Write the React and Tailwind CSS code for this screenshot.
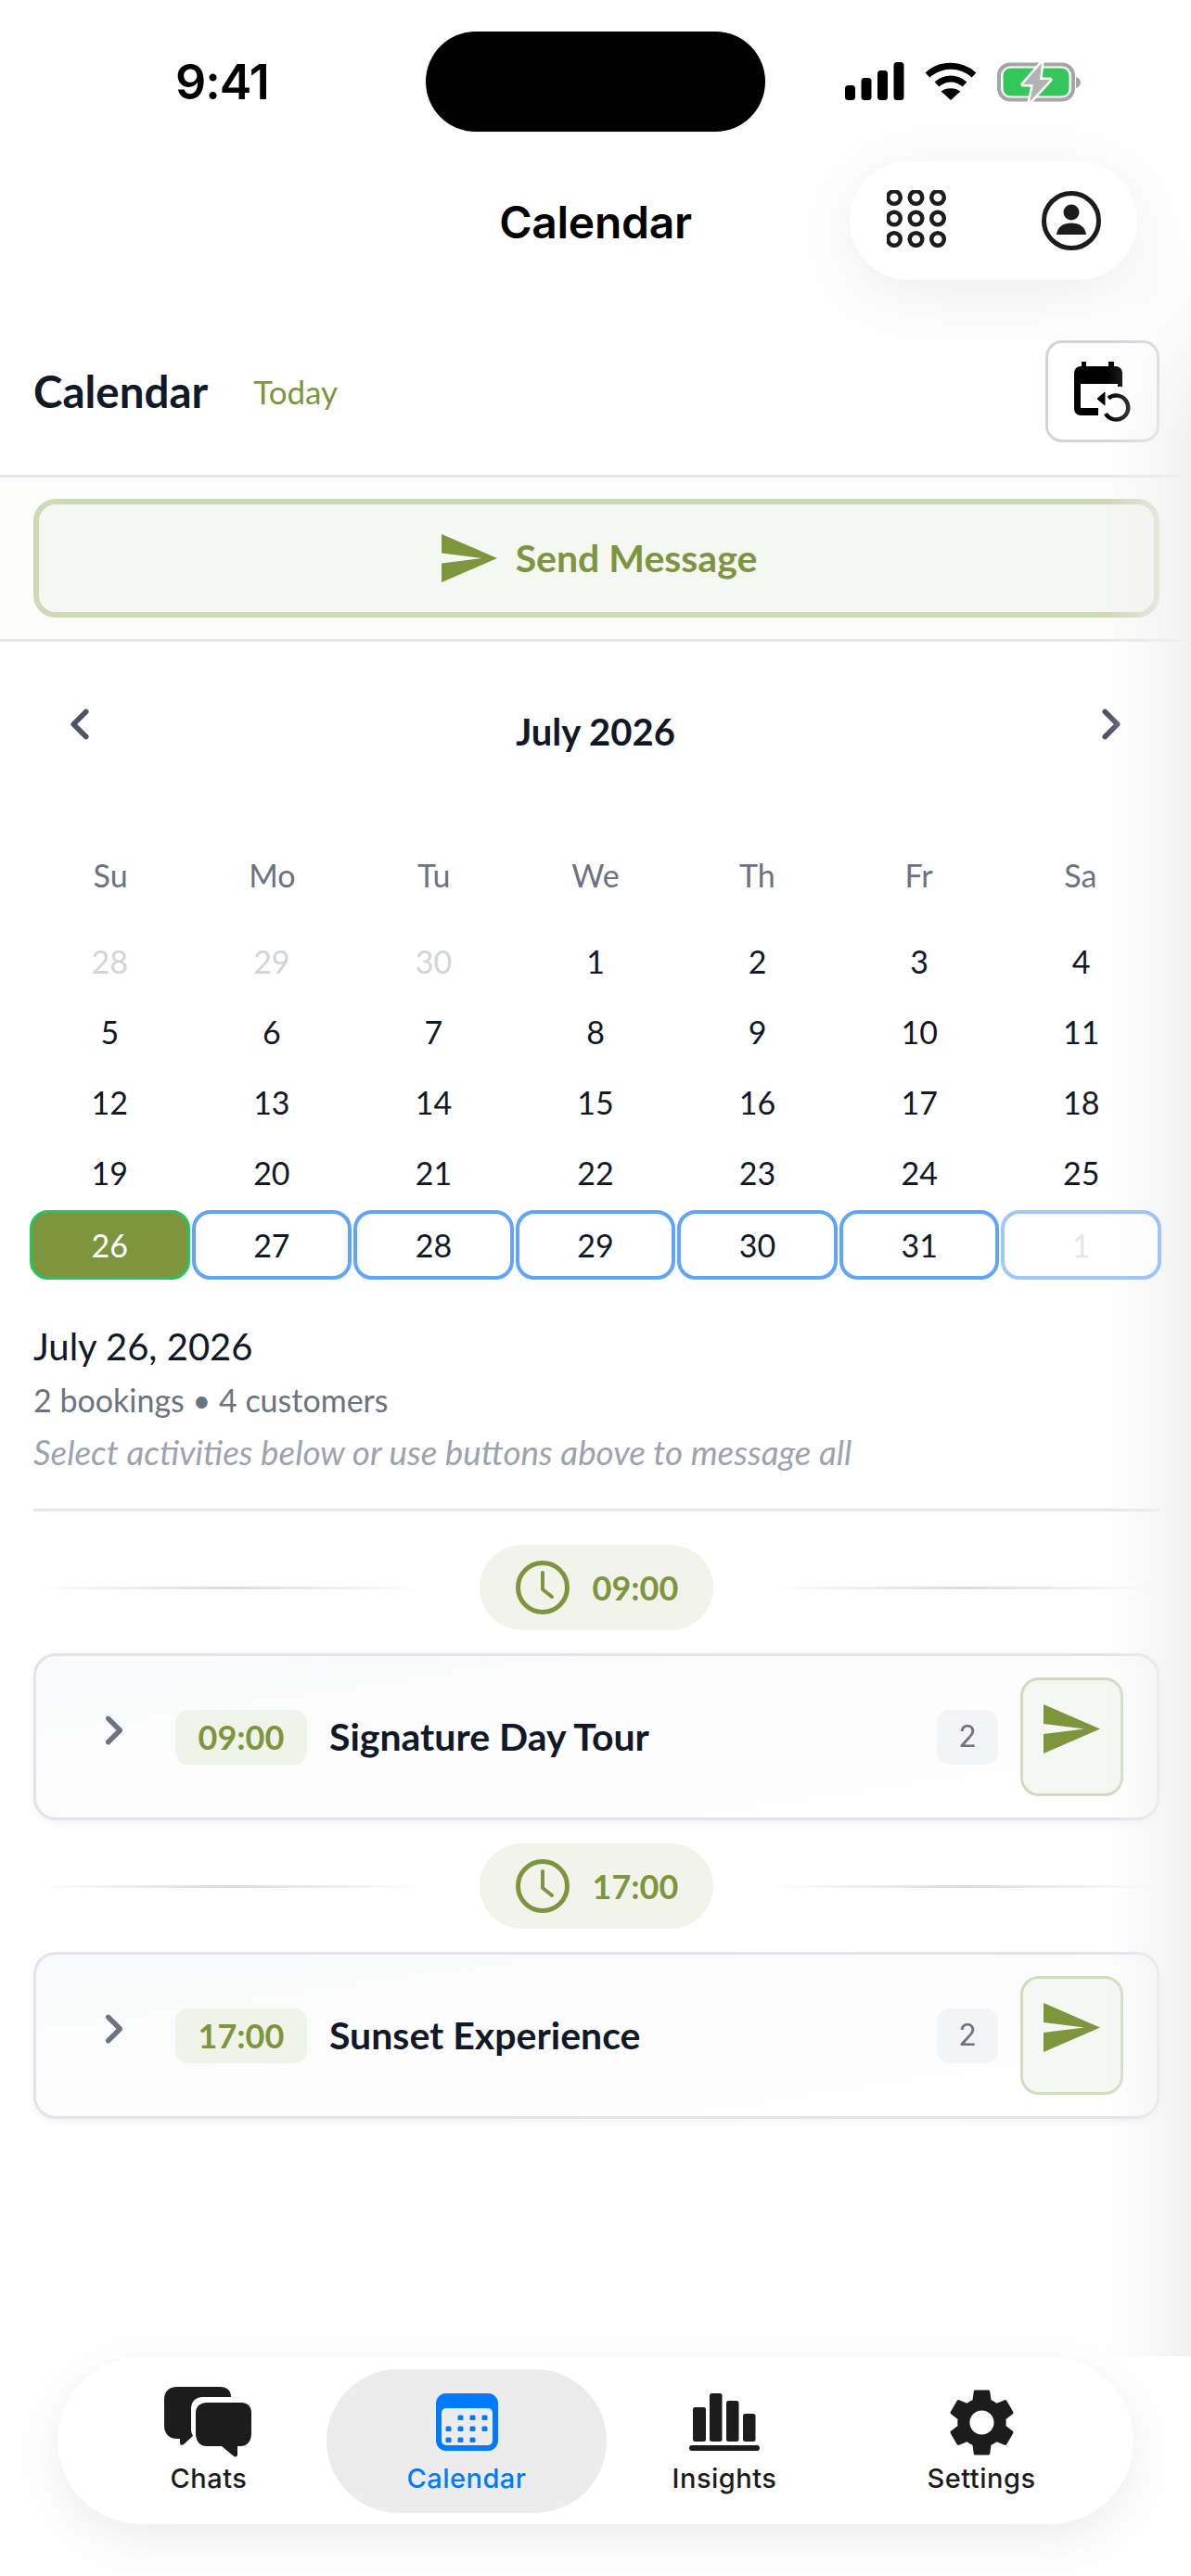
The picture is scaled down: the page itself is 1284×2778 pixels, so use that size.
import React from "react";

const weeks = [
  [[28, 1], [29, 1], [30, 1], [1], [2], [3], [4]],
  [[5], [6], [7], [8], [9], [10], [11]],
  [[12], [13], [14], [15], [16], [17], [18]],
  [[19], [20], [21], [22], [23], [24], [25]],
];

const activities = [
  { time: "09:00", title: "Signature Day Tour" },
  { time: "17:00", title: "Sunset Experience" },
];

function SendIcon({ className }) {
  return (
    <svg viewBox="0 0 61 53" className={className} fill="#7d963e">
      <path d="M0 0 L61 26.5 L0 53 L0 32 L44 26.5 L0 21 Z" />
    </svg>
  );
}

function Chevron({ dir = "right", className, stroke = "#4b5563" }) {
  return (
    <svg viewBox="0 0 20 32" className={className} fill="none" stroke={stroke} strokeWidth="5" strokeLinecap="round" strokeLinejoin="round">
      <path d={dir === "right" ? "M4 4 L16 16 L4 28" : "M16 4 L4 16 L16 28"} />
    </svg>
  );
}

function StatusIcons() {
  return (
    <div className="flex items-start gap-[22px]">
      <svg width="64" height="41" viewBox="0 0 64 41" fill="#000">
        <rect x="0" y="25" width="11" height="16" rx="3.5" />
        <rect x="17.5" y="17" width="11" height="24" rx="3.5" />
        <rect x="35" y="9" width="11" height="32" rx="3.5" />
        <rect x="52.5" y="0" width="11" height="41" rx="3.5" />
      </svg>
      <svg width="56" height="41" viewBox="0 0 56 41" fill="none" stroke="#000">
        <path d="M3 14 C17 1 39 1 53 14" strokeWidth="7" />
        <path d="M13 24 C22 16 34 16 43 24" strokeWidth="7" />
        <path d="M28 41 L17.5 31.5 C23 27 33 27 38.5 31.5 Z" fill="#000" stroke="none" />
      </svg>
      <svg width="90" height="44" viewBox="0 0 90 44" fill="none">
        <rect x="2" y="2.500" width="80" height="38" rx="12" stroke="#a5a5a5" strokeWidth="4" />
        <rect x="6.500" y="6.500" width="71" height="30" rx="8" fill="#34c759" />
        <path d="M85 16 C88 17 90 19 90 22 C90 25 88 27 85 28 Z" fill="#a5a5a5" />
        <path d="M48 1 L28 24 L39 24 L35 43 L57 19 L46 19 Z" fill="#b3b3b3" stroke="#fff" strokeWidth="5" paintOrder="stroke" strokeLinejoin="round" />
      </svg>
    </div>
  );
}

function GridIcon() {
  const cells = [0, 1, 2, 3, 4, 5, 6, 7, 8];
  return (
    <svg width="68" height="66" viewBox="0 0 68 66" fill="none" stroke="#1c1c1c" strokeWidth="4.5">
      {cells.map((i) => (
        <circle key={i} cx={8 + (i % 3) * 23.5} cy={8 + Math.floor(i / 3) * 22.5} r="6.8" />
      ))}
    </svg>
  );
}

function ProfileIcon() {
  return (
    <svg width="66" height="66" viewBox="0 0 66 66">
      <circle cx="33" cy="33" r="29.5" fill="none" stroke="#1c1c1c" strokeWidth="5" />
      <circle cx="33" cy="24" r="8.5" fill="#1c1c1c" />
      <path d="M17 48 C18 39 25 35.5 33 35.5 C41 35.5 48 39 49 48 Z" fill="#1c1c1c" />
    </svg>
  );
}

function CalendarRestoreIcon() {
  return (
    <svg width="62" height="65" viewBox="0 0 62 65" fill="none">
      <path d="M8 0 h5 v5 h24 v-5 h6 v5 h2 a7 7 0 0 1 7 7 v15 h-5 v-3 h-40 v25 q0 1 1 1 h18 v8 h-19 a7 7 0 0 1 -7 -7 v-39 a7 7 0 0 1 7 -7 h1 Z" fill="#000" />
      <path d="M37 39.500 A13 13 0 1 1 34 56" stroke="#000" strokeWidth="4.500" />
      <path d="M33 33 L33 47 L25 40 Z" fill="#000" stroke="#000" strokeWidth="1" strokeLinejoin="round" />
    </svg>
  );
}

function ClockIcon() {
  return (
    <svg width="60" height="60" viewBox="0 0 60 60" fill="none" stroke="#7d963e" strokeWidth="5" strokeLinecap="round" strokeLinejoin="round">
      <circle cx="30" cy="30" r="26.500" />
      <path d="M30 14 V32 L40 40" strokeWidth="4" />
    </svg>
  );
}

function ChatsIcon() {
  return (
    <svg width="96" height="76" viewBox="0 0 96 76" fill="#1c1c1c">
      <path d="M14 0 H60 C68 0 72 4 72 11 H42 C32 11 29 18 29 24 V46 C29 48 29.500 50 31 53 L21 62 C19 63.500 17 63 17 60 V56 H14 C5 56 0 50 0 42 V14 C0 5 5 0 14 0 Z" />
      <path d="M46 17 H83 C91 17 94 22 94 28 V50 C94 58 90 64 82 64 H79 V73 C79 76 76 76 74 74 L62 64 H46 C38 64 34 58 34 50 V28 C34 22 38 17 46 17 Z" />
    </svg>
  );
}

function CalendarTabIcon() {
  const dots = [
    [26, 26], [39, 26], [52, 26],
    [13, 38], [26, 38], [39, 38], [52, 38],
    [13, 50], [26, 50], [39, 50],
  ];
  return (
    <svg width="67" height="62" viewBox="0 0 67 62">
      <rect x="0" y="0" width="67" height="62" rx="11" fill="#007aff" />
      <rect x="6" y="16" width="55" height="40" rx="5" fill="#ececec" />
      {dots.map(([x, y]) => (
        <rect key={`${x}-${y}`} x={x - 2.500} y={y - 2.500} width="6" height="5.500" rx="1.500" fill="#007aff" />
      ))}
    </svg>
  );
}

function InsightsIcon() {
  return (
    <svg width="76" height="62" viewBox="0 0 76 62" fill="#1c1c1c">
      <rect x="4" y="15" width="14" height="37" rx="2.500" />
      <rect x="22" y="0" width="13.500" height="52" rx="2.500" />
      <rect x="40" y="8" width="13.500" height="44" rx="2.500" />
      <rect x="58" y="22" width="13.500" height="30" rx="2.500" />
      <rect x="0" y="56" width="76" height="6" rx="3" />
    </svg>
  );
}

function GearIcon() {
  return (
    <svg width="71" height="71" viewBox="2.500 2.250 19 19.500" fill="#1c1c1c">
      <path d="M19.140 12.940c.040-.3.060-.61.060-.94 0-.32-.02-.64-.07-.94l2.030-1.580a.49.49 0 0 0 .12-.61l-1.920-3.320a.488.488 0 0 0-.59-.22l-2.390.96c-.5-.38-1.030-.7-1.620-.94l-.36-2.540a.484.484 0 0 0-.48-.41h-3.840c-.24 0-.43.170-.47.410l-.36 2.540c-.59.240-1.130.570-1.620.94l-2.390-.96c-.22-.08-.47 0-.59.220L2.740 8.870c-.12.210-.08.470.12.610l2.030 1.580c-.05.300-.09.630-.09.940s.02.640.07.940l-2.030 1.580a.49.490 0 0 0-.12.610l1.920 3.320c.12.220.37.290.59.220l2.390-.96c.5.380 1.030.7 1.620.94l.36 2.540c.05.240.24.410.48.410h3.840c.24 0 .44-.17.47-.41l.36-2.540c.59-.24 1.130-.56 1.620-.94l2.390.96c.22.080.47 0 .59-.22l1.920-3.320c.12-.22.070-.47-.12-.61l-2.010-1.580zM12 15.600c-1.980 0-3.600-1.620-3.600-3.600s1.620-3.600 3.600-3.600 3.600 1.620 3.600 3.600-1.620 3.600-3.600 3.600z" />
    </svg>
  );
}

function TimeDivider({ time }) {
  return (
    <div className="flex items-center justify-between pr-[34px] pl-[36px]">
      <div className="h-[3px] w-[420px] bg-gradient-to-r from-transparent via-[#d9dbe0] to-transparent" />
      <div className="flex h-[92px] w-[252px] items-center justify-center gap-[24px] rounded-full bg-[#f2f4ec]">
        <ClockIcon />
        <span className="text-[36px] font-bold text-[#7d963e]">{time}</span>
      </div>
      <div className="h-[3px] w-[420px] bg-gradient-to-r from-transparent via-[#d9dbe0] to-transparent" />
    </div>
  );
}

function ActivityCard({ time, title }) {
  return (
    <div className="mr-[34px] ml-[36px] flex h-[180px] items-center rounded-[24px] border-[3px] border-[#e2e4e9] bg-gradient-to-br from-[#f9fafb] to-white pr-[36px] pl-[71px] shadow-[0_3px_8px_rgba(0,0,0,0.05)]">
      <Chevron className="mb-[14px] h-[34px] w-[26px]" stroke="#6b7280" />
      <div className="ml-[53px] flex h-[59px] w-[142px] items-center justify-center rounded-[14px] bg-[#f0f3e8] text-[36px] font-bold text-[#7d963e]">
        {time}
      </div>
      <div className="ml-[24px] flex-1 text-[41px] font-bold text-[#111827]">{title}</div>
      <div className="flex h-[59px] w-[66px] items-center justify-center rounded-[14px] bg-[#f3f4f6] font-['Inter',sans-serif] text-[32px] text-[#6b7280]">
        2
      </div>
      <div className="ml-[24px] flex h-[128px] w-[111px] items-start justify-center rounded-[20px] border-[3px] border-[#d2dcbd] bg-[#f5f7f2] pt-[26px]">
        <SendIcon className="h-[53px] w-[61px]" />
      </div>
    </div>
  );
}

function NavItem({ icon, label, className, active }) {
  return (
    <div className={className}>
      <div className="flex h-[84px] items-center">{icon}</div>
      <div className={`mt-[2px] font-['Inter',sans-serif] text-[29px] leading-[34px] font-medium tracking-[0.5px] ${active ? "text-[#007aff]" : "text-[#1c1c1c]"}`}>
        {label}
      </div>
    </div>
  );
}

export default function App() {
  return (
    <div className="relative flex h-[2778px] w-[1284px] flex-col overflow-hidden bg-white font-['Lato',sans-serif]">
      {/* shadow of the page underneath, along the right edge */}
      <div className="pointer-events-none absolute top-[260px] right-0 h-[2281px] w-[90px] bg-gradient-to-r from-transparent to-[#f1f1f1] [mask-image:linear-gradient(to_bottom,transparent,black_220px)]" />

      <div className="relative flex h-[174px] shrink-0 items-start">
        <div className="mt-[64px] ml-[189px] w-[104px] font-['Inter',sans-serif] text-[52px] leading-[50px] font-semibold tracking-[-1px] whitespace-nowrap text-black">
          9:41
        </div>
        <div className="mt-[34px] ml-[166px] h-[108px] w-[366px] rounded-full bg-black" />
        <div className="mt-[67px] ml-[86px]">
          <StatusIcons />
        </div>
      </div>

      <div className="relative flex h-[128px] shrink-0 items-center justify-center pt-[4px]">
        <div className="font-['Inter',sans-serif] text-[48px] font-semibold tracking-[-0.3px] text-black">Calendar</div>
        <div className="absolute top-0 right-[58px] flex h-[128px] w-[310px] items-center justify-between rounded-full bg-white pr-[38px] pl-[40px] shadow-[0_16px_80px_rgba(0,0,0,0.08)]">
          <GridIcon />
          <ProfileIcon />
        </div>
      </div>

      <div className="flex h-[213px] shrink-0 items-center border-b-[3px] border-[#e5e7eb] pt-[30px] pr-[34px] pl-[36px]">
        <div className="text-[47.500px] font-bold text-[#111827]">Calendar</div>
        <div className="ml-[49px] text-[35px] text-[#7d963e]">Today</div>
        <div className="ml-auto flex h-[110px] w-[123px] items-center justify-center rounded-[18px] border-[3px] border-[#d1d5db] bg-white">
          <CalendarRestoreIcon />
        </div>
      </div>

      <div className="flex h-[177px] shrink-0 items-center border-b-[3px] border-[#e5e7eb] bg-[#fcfdfb] pr-[34px] pl-[36px]">
        <div className="flex h-[128px] w-full items-center justify-center gap-[20px] rounded-[24px] border-[6px] border-[#ced9b8] bg-[#f5f7f2] pl-[6px]">
          <SendIcon className="h-[52px] w-[60px]" />
          <span className="text-[41px] font-bold text-[#7d963e]">Send Message</span>
        </div>
      </div>

      <div className="flex h-[178px] shrink-0 items-center justify-between px-[74px]">
        <Chevron dir="left" className="h-[36px] w-[24px]" />
        <div className="mt-[16px] text-[40px] font-bold text-[#111827]">July 2026</div>
        <Chevron className="h-[36px] w-[24px]" />
      </div>

      <div className="mt-[54px] grid h-[75px] shrink-0 grid-cols-7 px-[32px] text-center text-[34px] leading-[40px] text-[#6b7280]">
        {["Su", "Mo", "Tu", "We", "Th", "Fr", "Sa"].map((day) => (
          <div key={day}>{day}</div>
        ))}
      </div>

      <div className="grid shrink-0 grid-cols-7 gap-x-[2px] px-[32px] text-center text-[34px] leading-[76px] text-[#111827]">
        {weeks.flat().map(([n, muted], i) => (
          <div key={i} className={muted ? "h-[76px] text-[#d1d5db]" : "h-[76px]"}>
            {n}
          </div>
        ))}
        <div className="mt-[2px] flex h-[75px] items-center justify-center rounded-[20px] border-[3px] border-[#22c55e] bg-[#7d963e] text-white">26</div>
        {[27, 28, 29, 30, 31].map((n) => (
          <div key={n} className="mt-[2px] flex h-[75px] items-center justify-center rounded-[20px] border-[4px] border-[#60a5fa] bg-white">
            {n}
          </div>
        ))}
        <div className="mt-[2px] flex h-[75px] items-center justify-center rounded-[20px] border-[4px] border-[#60a5fa] bg-white text-[#d1d5db] opacity-60">1</div>
      </div>

      <div className="mt-[47px] shrink-0 pr-[34px] pl-[36px]">
        <div className="text-[40px] leading-[50px] text-[#111827]">July 26, 2026</div>
        <div className="mt-[12px] text-[34px] leading-[42px] text-[#6b7280]">2 bookings • 4 customers</div>
        <div className="mt-[14px] text-[36.8px] leading-[42px] text-[#9ca3af] italic">Select activities below or use buttons above to message all</div>
        <div className="mt-[40px] h-[3px] bg-[#e5e7eb]" />
      </div>

      <div className="mt-[36px] flex shrink-0 flex-col gap-[25px]">
        {activities.map((a) => (
          <React.Fragment key={a.time}>
            <TimeDivider time={a.time} />
            <ActivityCard time={a.time} title={a.title} />
          </React.Fragment>
        ))}
      </div>

      <div className="relative mt-auto mb-[56px] flex h-[180px] w-[1160px] shrink-0 items-center self-center rounded-[90px] bg-white pl-[36px] shadow-[0_16px_60px_rgba(0,0,0,0.08)]">
        <NavItem icon={<ChatsIcon />} label="Chats" className="flex w-[254px] flex-col items-center pb-[4px]" />
        <NavItem icon={<CalendarTabIcon />} label="Calendar" active className="flex h-[155px] w-[302px] flex-col items-center justify-center rounded-full bg-[#ececec] pb-[4px]" />
        <NavItem icon={<InsightsIcon />} label="Insights" className="flex w-[254px] flex-col items-center pb-[4px]" />
        <NavItem icon={<GearIcon />} label="Settings" className="flex w-[300px] flex-col items-center pb-[4px]" />
      </div>
    </div>
  );
}
